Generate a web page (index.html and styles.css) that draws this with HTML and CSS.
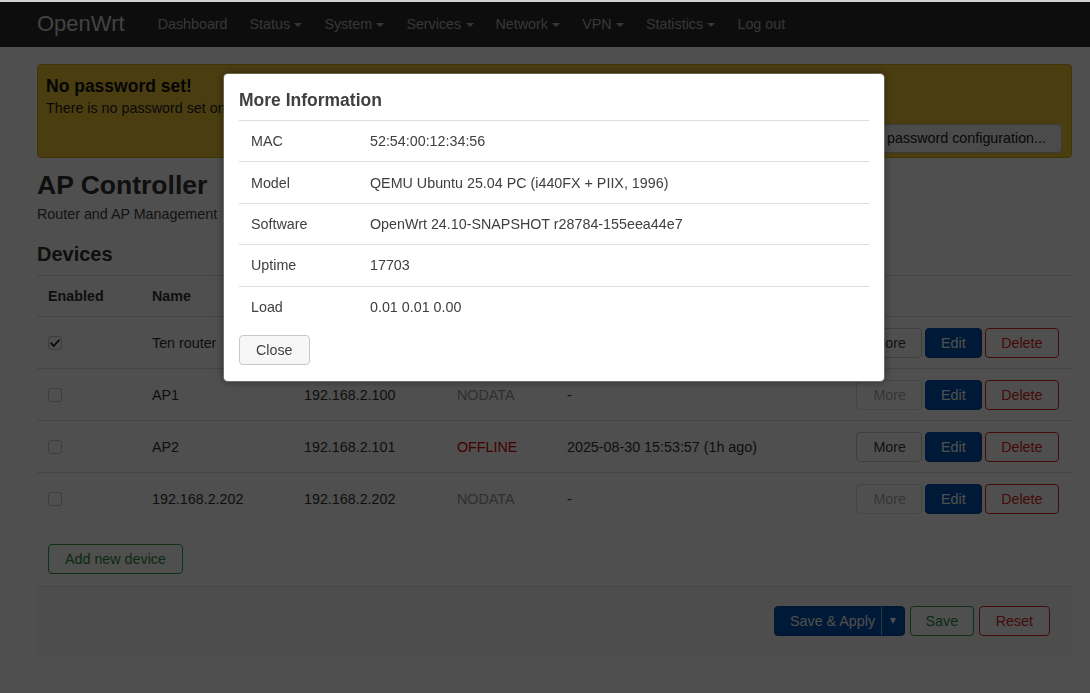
FILE: index.html
```html
<!DOCTYPE html>
<html lang="en">
<head>
<meta charset="utf-8">
<title>AP Controller - OpenWrt</title>
<link rel="stylesheet" href="styles.css">
</head>
<body>
<div class="topline"></div>
<header class="navbar">
  <a class="brand" href="#">OpenWrt</a>
  <ul class="nav">
    <li><a href="#">Dashboard</a></li>
    <li><a href="#">Status<span class="caret"></span></a></li>
    <li><a href="#">System<span class="caret"></span></a></li>
    <li><a href="#">Services<span class="caret"></span></a></li>
    <li><a href="#">Network<span class="caret"></span></a></li>
    <li><a href="#">VPN<span class="caret"></span></a></li>
    <li><a href="#">Statistics<span class="caret"></span></a></li>
    <li><a href="#">Log out</a></li>
  </ul>
</header>

<main class="container">
  <div class="alert">
    <h4 class="alert-title">No password set!</h4>
    <p class="alert-text">There is no password set on this router. Please configure a root password to protect the web interface.</p>
    <div class="alert-actions"><button class="btn btn-plain">Go to password configuration...</button></div>
  </div>

  <h2 class="page-title">AP Controller</h2>
  <div class="page-desc">Router and AP Management</div>

  <h3 class="section-title">Devices</h3>
  <table class="devices">
    <thead>
      <tr>
        <th class="col-en">Enabled</th>
        <th class="col-name">Name</th>
        <th class="col-addr">Address</th>
        <th class="col-status">Status</th>
        <th class="col-seen">Last Seen</th>
        <th class="col-act"></th>
      </tr>
    </thead>
    <tbody>
      <tr>
        <td><span class="check checked"><svg viewBox="0 0 14 14" width="14" height="14"><path d="M3 7.2 L5.8 10 L11 4.2" fill="none" stroke="#222" stroke-width="1.8" stroke-linecap="round" stroke-linejoin="round"/></svg></span></td>
        <td>Ten router</td>
        <td>192.168.2.1</td>
        <td class="st-online">ONLINE</td>
        <td>2025-08-30 16:58:41 (0s ago)</td>
        <td class="col-act"><div class="row-btns"><button class="btn btn-more">More</button><button class="btn btn-edit">Edit</button><button class="btn btn-delete">Delete</button></div></td>
      </tr>
      <tr>
        <td><span class="check"></span></td>
        <td>AP1</td>
        <td>192.168.2.100</td>
        <td class="st-nodata">NODATA</td>
        <td>-</td>
        <td class="col-act"><div class="row-btns"><button class="btn btn-more" disabled>More</button><button class="btn btn-edit">Edit</button><button class="btn btn-delete">Delete</button></div></td>
      </tr>
      <tr>
        <td><span class="check"></span></td>
        <td>AP2</td>
        <td>192.168.2.101</td>
        <td class="st-offline">OFFLINE</td>
        <td>2025-08-30 15:53:57 (1h ago)</td>
        <td class="col-act"><div class="row-btns"><button class="btn btn-more">More</button><button class="btn btn-edit">Edit</button><button class="btn btn-delete">Delete</button></div></td>
      </tr>
      <tr>
        <td><span class="check"></span></td>
        <td>192.168.2.202</td>
        <td>192.168.2.202</td>
        <td class="st-nodata">NODATA</td>
        <td>-</td>
        <td class="col-act"><div class="row-btns"><button class="btn btn-more" disabled>More</button><button class="btn btn-edit">Edit</button><button class="btn btn-delete">Delete</button></div></td>
      </tr>
    </tbody>
  </table>

  <div class="add-row"><button class="btn btn-add">Add new device</button></div>

  <div class="page-actions">
    <div class="split">
      <button class="split-main">Save &amp; Apply</button><button class="split-toggle"><span class="tri"></span></button>
    </div>
    <button class="btn btn-save">Save</button>
    <button class="btn btn-reset">Reset</button>
  </div>
</main>

<div class="overlay">
  <div class="modal">
    <h4 class="modal-title">More Information</h4>
    <table class="info">
      <tr><td class="info-key">MAC</td><td>52:54:00:12:34:56</td></tr>
      <tr><td class="info-key">Model</td><td>QEMU Ubuntu 25.04 PC (i440FX + PIIX, 1996)</td></tr>
      <tr><td class="info-key">Software</td><td>OpenWrt 24.10-SNAPSHOT r28784-155eea44e7</td></tr>
      <tr><td class="info-key">Uptime</td><td>17703</td></tr>
      <tr><td class="info-key">Load</td><td>0.01 0.01 0.00</td></tr>
    </table>
    <button class="btn btn-close">Close</button>
  </div>
</div>
</body>
</html>
```

FILE: styles.css
```css
* { box-sizing: border-box; }
html, body { margin: 0; padding: 0; }
body {
  font-family: "Liberation Sans", Arial, Helvetica, sans-serif;
  font-size: 14.3px;
  line-height: 18px;
  color: #404040;
  background: #fff;
}

.topline {
  position: fixed;
  top: 0; left: 0; right: 0;
  height: 2px;
  background: #d0d0d0;
  z-index: 30;
}

/* navbar */
.navbar {
  height: 47px;
  background: #2c2c2c;
  display: flex;
  align-items: center;
  padding-left: 37px;
}
.brand {
  font-size: 22px;
  line-height: 26px;
  color: #d4d4d4;
  text-decoration: none;
  margin-right: 22px;
}
.nav {
  display: flex;
  list-style: none;
  margin: 0;
  padding: 0;
}
.nav a {
  display: flex;
  align-items: center;
  padding: 0 11px;
  color: #b0b0b0;
  text-decoration: none;
  line-height: 20px;
}
.caret {
  display: inline-block;
  width: 0; height: 0;
  margin-left: 4.3px;
  margin-top: 3px;
  border-top: 4px solid #b0b0b0;
  border-left: 4px solid transparent;
  border-right: 4px solid transparent;
}

/* content */
.container {
  width: 1035px;
  margin-left: 37px;
  padding-top: 17px;
}
.alert {
  background: #eec736;
  border: 1px solid #cfa81a;
  border-radius: 4px;
  padding: 11px 9px 4px 8px;
  color: #222;
}
.alert-title {
  margin: 0;
  font-size: 17.5px;
  line-height: 20px;
  font-weight: bold;
  color: #111;
}
.alert-text { margin: 3px 0 0; }
.alert-actions {
  display: flex;
  justify-content: flex-end;
  margin-top: 7px;
}

.btn {
  font-family: inherit;
  font-size: 14.3px;
  line-height: 18px;
  padding: 5px 15px;
  border: 1px solid #ccc;
  border-radius: 4px;
  background: #fff;
  color: #404040;
  cursor: pointer;
}
.btn-plain {
  background: #f2f2f2;
  border-color: #bbb;
  line-height: 17px;
  color: #222;
}

.page-title {
  margin: 12px 0 0;
  font-size: 26.5px;
  line-height: 30px;
  font-weight: bold;
  color: #333;
}
.page-desc { margin-top: 5px; color: #404040; }
.section-title {
  margin: 19px 0 9px;
  font-size: 20px;
  line-height: 24px;
  font-weight: bold;
  color: #333;
}

.devices {
  width: 100%;
  border-collapse: collapse;
  table-layout: fixed;
  border-top: 1px solid #ddd;
}
.devices th {
  text-align: left;
  padding: 11px;
  font-weight: bold;
  color: #333;
  border-bottom: 1px solid #ddd;
}
.devices td {
  padding: 10.5px 11px;
  vertical-align: middle;
  color: #333;
}
.devices tbody tr + tr td { border-top: 1px solid #ddd; }
.col-en { width: 104px; }
.col-name { width: 152px; }
.col-addr { width: 153px; }
.col-status { width: 110px; }
.col-act { width: 226px; }
.devices .col-act { padding-right: 13px; }
.row-btns {
  display: flex;
  justify-content: flex-end;
  gap: 3px;
}
.check {
  display: inline-block;
  width: 14px; height: 14px;
  border: 1px solid #c4c4c4;
  border-radius: 3px;
  vertical-align: middle;
  position: relative;
  top: -1px;
  background: #fff;
}
.check svg { display: block; margin: -1px; }

.st-nodata { color: #999 !important; }
.st-offline { color: #d00 !important; }
.st-online { color: #3a3 !important; }

.btn-more { background: #fff; padding: 5px 15px 5px 16px; }
.btn-more:disabled { color: #aaa; border-color: #ddd; cursor: default; }
.btn-edit {
  background: #0050b0;
  border-color: #00479e;
  color: #fff;
}
.btn-delete {
  background: #fff;
  border-color: #d22;
  color: #d22;
  padding: 5px 15.5px;
}
.btn-add, .btn-save {
  background: #fff;
  border-color: #2a9a4a;
  color: #1f8a3e;
}
.btn-add { padding: 5px 16px; }
.btn-save { padding: 5px 14.5px; }
.btn-reset {
  background: #fff;
  border-color: #d22;
  color: #d22;
  padding: 5px 16px;
}

.add-row { margin-top: 20px; padding-left: 11px; }

.page-actions {
  margin-top: 12px;
  background: #f7f7f7;
  border-top: 1px solid #ddd;
  padding: 19px 22px 19px;
  display: flex;
  justify-content: flex-end;
  gap: 5px;
}
.split {
  display: flex;
  background: #0050b0;
  border: 1px solid #00479e;
  border-radius: 4px;
}
.split button {
  font-family: inherit;
  font-size: 14.3px;
  line-height: 18px;
  background: transparent;
  border: 0;
  color: #fff;
  padding: 5px 6px 5px 15px;
}
.split .split-toggle {
  border-left: 1px solid rgba(255,255,255,.55);
  padding: 5px 8px;
  display: flex;
  align-items: center;
}
.tri {
  display: block;
  width: 0; height: 0;
  border-top: 6px solid #fff;
  border-left: 3.5px solid transparent;
  border-right: 3.5px solid transparent;
}

/* modal */
.overlay {
  position: fixed;
  top: 0; left: 0; right: 0; bottom: 0;
  background: rgba(0,0,0,.69);
  z-index: 20;
}
.modal {
  width: 660px;
  margin: 74px 0 0 224px;
  background: #fff;
  border-radius: 4px;
  box-shadow: 0 0 0 1px rgba(255,255,255,.25), 0 0 10px rgba(0,0,0,.5);
  padding: 16px 15px;
}
.modal-title {
  margin: 0 0 10px;
  font-size: 17.5px;
  line-height: 20px;
  font-weight: bold;
  color: #404040;
}
.info {
  width: 100%;
  border-collapse: collapse;
}
.info td {
  border-top: 1px solid #ddd;
  padding: 11.2px 12px;
  color: #404040;
}
.info .info-key { width: 119px; }
.btn-close {
  margin-top: 8px;
  background: #f7f7f7;
  border-color: #c8c8c8;
  padding: 5px 16px;
}
```
